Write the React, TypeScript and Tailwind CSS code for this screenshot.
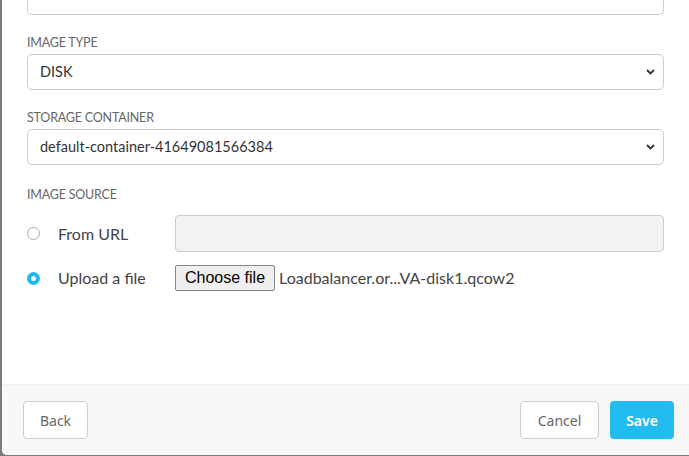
import React from 'react';

const Chevron = () => (
  <svg width="9" height="6" viewBox="0 0 9 6" className="shrink-0">
    <path d="M1 1l3.5 3.5L8 1" fill="none" stroke="#333" strokeWidth="1.8" />
  </svg>
);

const Label = ({ children }: { children: React.ReactNode }) => (
  <div className="text-[12.5px] leading-[16px] text-[#666] uppercase tracking-[-0.2px]">{children}</div>
);

const SelectBox = ({ value }: { value: string }) => (
  <div className="mt-[3px] h-[36px] border border-[#ccc] rounded-[5px] flex items-center justify-between pl-[12px] pr-[8px] text-[14.5px] text-[#333]">
    <span>{value}</span>
    <Chevron />
  </div>
);

export default function App() {
  return (
    <div className="w-[689px] h-[456px] bg-[#7b7b7b] overflow-hidden" style={{ fontFamily: 'Lato, sans-serif' }}>
      <div className="ml-[2px] h-[455px] bg-white rounded-bl-[5px] flex flex-col overflow-hidden">
        <div className="flex-1 px-[25px]">
          <div className="h-[15px] border border-t-0 border-[#ccc] rounded-b-[5px]" />

          <div className="mt-[20px]">
            <Label>Image type</Label>
            <SelectBox value="DISK" />
          </div>

          <div className="mt-[20px]">
            <Label>Storage container</Label>
            <SelectBox value="default-container-41649081566384" />
          </div>

          <div className="mt-[22px]">
            <Label>Image source</Label>

            <div className="mt-[12px] flex items-center">
              <span className="w-[13px] h-[13px] rounded-full border border-[#aaa] bg-white" />
              <span className="ml-[18px] w-[117px] text-[16px] text-[#444]">From URL</span>
              <div className="flex-1 h-[37px] bg-[#f2f2f2] border border-[#ccc] rounded-[4px]" />
            </div>

            <div className="mt-[13px] flex items-center">
              <span className="w-[13px] h-[13px] rounded-full border-[4px] border-[#1fb8ef] bg-white" />
              <span className="ml-[18px] w-[117px] text-[16px] text-[#444]">Upload a file</span>
              <span
                className="h-[26px] px-[9px] bg-[#efefef] border border-[#858585] rounded-[2px] text-[16px] text-black flex items-center"
                style={{ fontFamily: '"Liberation Sans", Arial, sans-serif' }}
              >
                Choose file
              </span>
              <span className="ml-[4px] text-[16px] text-[#444]">Loadbalancer.or...VA-disk1.qcow2</span>
            </div>
          </div>
        </div>

        <div
          className="h-[71px] bg-[#f8f8f8] border-t border-[#efefef] flex items-center justify-between pl-[21px] pr-[15px]"
          style={{ fontFamily: '"Noto Sans", sans-serif' }}
        >
          <button className="h-[38px] w-[65px] bg-white border border-[#ccc] rounded-[4px] text-[14px] text-[#666]">Back</button>
          <div className="flex items-center gap-[11px]">
            <button className="h-[38px] w-[79px] bg-white border border-[#ccc] rounded-[4px] text-[14px] text-[#666]">Cancel</button>
            <button className="h-[38px] w-[64px] bg-[#22bcf0] rounded-[4px] text-[14px] font-semibold text-white">Save</button>
          </div>
        </div>
      </div>
    </div>
  );
}
